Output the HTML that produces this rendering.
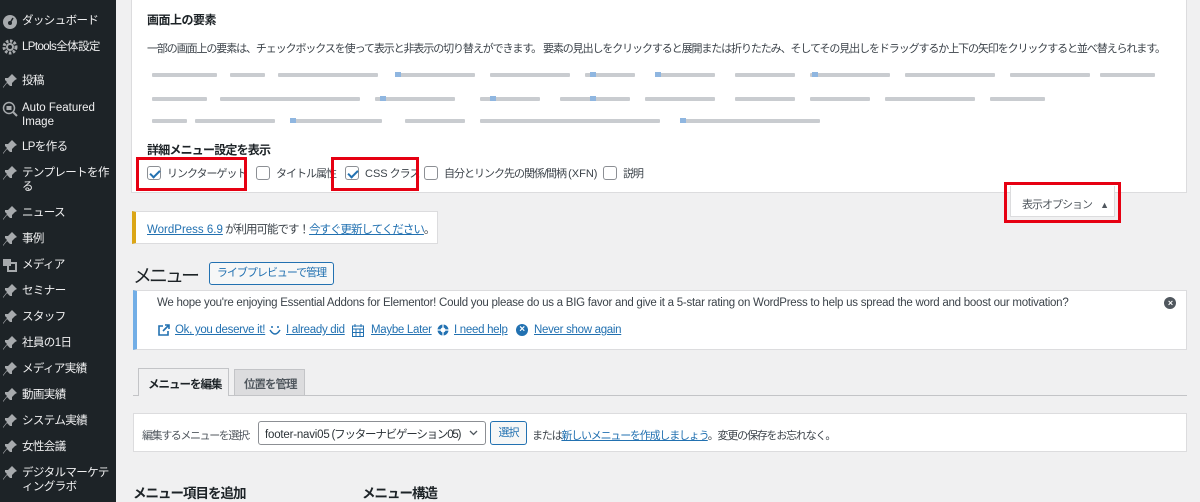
<!DOCTYPE html>
<html><head><meta charset="utf-8"><style>
*{margin:0;padding:0;box-sizing:border-box}
body{width:1200px;height:502px;overflow:hidden;background:#f0f0f1;font-family:"Liberation Sans","Noto Sans CJK JP",sans-serif;font-size:11px;letter-spacing:-1px;color:#3c434a;position:relative}
.a{position:absolute;white-space:nowrap}
#sb{position:absolute;left:0;top:0;width:116px;height:502px;background:#1d2327}
.si{position:absolute;left:22px;color:#f0f0f1;font-size:11.5px;letter-spacing:-0.6px;line-height:14px;white-space:nowrap}
.ic{position:absolute;left:2px;width:16px;height:16px}
.cb{display:inline-block;width:14px;height:14px;border:1px solid #8c8f94;border-radius:3px;background:#fff;vertical-align:-3px;margin-right:6px;position:relative}
.cb.on::after{content:"";position:absolute;left:4px;top:1px;width:4px;height:8px;border:solid #2271b1;border-width:0 2px 2px 0;transform:rotate(45deg)}
.red{position:absolute;border:3px solid #e60012}
.bl{position:absolute;height:4px;background:#c9ccd0;border-radius:1px}
.bb{position:absolute;height:5px;width:6px;background:#8fb6e0}
a{color:#2271b1}
.en{letter-spacing:0}
</style></head><body>
<svg width="0" height="0" style="position:absolute"><defs>
<symbol id="pin" viewBox="0 0 16 16"><path d="M10 1 L15 6 L13 7 L10 10 L10 13 L8 13 L5 10 L1 15 L1 14 L5 9 L3 7 L3 5 L6 5 L9 2 Z" fill="#a7aaad"/></symbol>
</defs></svg>
<div id="sb">
<svg class="ic" style="top:13px" viewBox="0 0 16 16"><circle cx="8" cy="9" r="7" fill="#a7aaad"/><circle cx="8" cy="10" r="2" fill="#1d2327"/><path d="M8 10 L11 5" stroke="#1d2327" stroke-width="1.5"/></svg><div class="si" style="top:14px">ダッシュボード</div>
<svg class="ic" style="top:39px" viewBox="0 0 16 16"><circle cx="8" cy="8" r="6" fill="none" stroke="#a7aaad" stroke-width="3" stroke-dasharray="2.5 1.5"/><circle cx="8" cy="8" r="4" fill="#a7aaad"/><circle cx="8" cy="8" r="2" fill="#1d2327"/></svg><div class="si" style="top:40px">LPtools全体設定</div>
<svg class="ic" style="top:73px"><use href="#pin"/></svg><div class="si" style="top:74px">投稿</div>
<svg class="ic" style="top:101px" viewBox="0 0 16 16"><circle cx="7" cy="7" r="5.5" fill="none" stroke="#a7aaad" stroke-width="1.5"/><path d="M11 11 L15 15" stroke="#a7aaad" stroke-width="2"/><rect x="4.5" y="5" width="5" height="4" fill="#a7aaad"/></svg><div class="si en" style="top:101px;letter-spacing:0">Auto Featured<br>Image</div>
<svg class="ic" style="top:139px"><use href="#pin"/></svg><div class="si" style="top:140px">LPを作る</div>
<svg class="ic" style="top:165px"><use href="#pin"/></svg><div class="si" style="top:166px">テンプレートを作<br>る</div>
<svg class="ic" style="top:205px"><use href="#pin"/></svg><div class="si" style="top:206px">ニュース</div>
<svg class="ic" style="top:231px"><use href="#pin"/></svg><div class="si" style="top:232px">事例</div>
<svg class="ic" style="top:257px" viewBox="0 0 16 16"><rect x="1" y="2" width="8" height="7" fill="#a7aaad"/><rect x="6" y="6" width="8" height="8" fill="none" stroke="#a7aaad" stroke-width="2"/></svg><div class="si" style="top:258px">メディア</div>
<svg class="ic" style="top:283px"><use href="#pin"/></svg><div class="si" style="top:284px">セミナー</div>
<svg class="ic" style="top:309px"><use href="#pin"/></svg><div class="si" style="top:310px">スタッフ</div>
<svg class="ic" style="top:335px"><use href="#pin"/></svg><div class="si" style="top:336px">社員の1日</div>
<svg class="ic" style="top:361px"><use href="#pin"/></svg><div class="si" style="top:362px">メディア実績</div>
<svg class="ic" style="top:387px"><use href="#pin"/></svg><div class="si" style="top:388px">動画実績</div>
<svg class="ic" style="top:413px"><use href="#pin"/></svg><div class="si" style="top:414px">システム実績</div>
<svg class="ic" style="top:439px"><use href="#pin"/></svg><div class="si" style="top:440px">女性会議</div>
<svg class="ic" style="top:465px"><use href="#pin"/></svg><div class="si" style="top:466px">デジタルマーケテ<br>ィングラボ</div>
</div>

<div class="a" style="left:131px;top:0;width:1056px;height:193px;background:#fff;border:1px solid #dcdcde;border-top:none"></div>
<div class="a" style="left:147px;top:11px;font-weight:bold;color:#1d2327;font-size:12px;letter-spacing:-0.5px">画面上の要素</div>
<div class="a" style="left:147px;top:40px;font-size:11px;letter-spacing:-1.1px">一部の画面上の要素は、チェックボックスを使って表示と非表示の切り替えができます。 要素の見出しをクリックすると展開または折りたたみ、そしてその見出しをドラッグするか上下の矢印をクリックすると並べ替えられます。</div>

<div class="bl" style="left:152px;top:73px;width:65px"></div><div class="bl" style="left:230px;top:73px;width:35px"></div><div class="bl" style="left:278px;top:73px;width:100px"></div><div class="bl" style="left:395px;top:73px;width:80px"></div><div class="bl" style="left:490px;top:73px;width:80px"></div><div class="bl" style="left:585px;top:73px;width:50px"></div><div class="bl" style="left:655px;top:73px;width:60px"></div><div class="bl" style="left:735px;top:73px;width:60px"></div><div class="bl" style="left:810px;top:73px;width:80px"></div><div class="bl" style="left:905px;top:73px;width:90px"></div><div class="bl" style="left:1010px;top:73px;width:80px"></div><div class="bl" style="left:1100px;top:73px;width:55px"></div>
<div class="bl" style="left:152px;top:97px;width:55px"></div><div class="bl" style="left:220px;top:97px;width:140px"></div><div class="bl" style="left:375px;top:97px;width:80px"></div><div class="bl" style="left:480px;top:97px;width:60px"></div><div class="bl" style="left:560px;top:97px;width:70px"></div><div class="bl" style="left:645px;top:97px;width:70px"></div><div class="bl" style="left:735px;top:97px;width:60px"></div><div class="bl" style="left:810px;top:97px;width:60px"></div><div class="bl" style="left:885px;top:97px;width:90px"></div><div class="bl" style="left:990px;top:97px;width:55px"></div>
<div class="bl" style="left:152px;top:119px;width:35px"></div><div class="bl" style="left:195px;top:119px;width:80px"></div><div class="bl" style="left:292px;top:119px;width:90px"></div><div class="bl" style="left:405px;top:119px;width:60px"></div><div class="bl" style="left:480px;top:119px;width:180px"></div><div class="bl" style="left:680px;top:119px;width:140px"></div>
<div class="bb" style="left:395px;top:72px"></div><div class="bb" style="left:590px;top:72px"></div><div class="bb" style="left:655px;top:72px"></div><div class="bb" style="left:812px;top:72px"></div><div class="bb" style="left:380px;top:96px"></div><div class="bb" style="left:490px;top:96px"></div><div class="bb" style="left:590px;top:96px"></div><div class="bb" style="left:290px;top:118px"></div><div class="bb" style="left:680px;top:118px"></div>

<div class="a" style="left:147px;top:141px;font-weight:bold;color:#1d2327;font-size:12px;letter-spacing:-0.8px">詳細メニュー設定を表示</div>
<div class="a" style="left:147px;top:165px"><span class="cb on"></span>リンクターゲット</div>
<div class="a" style="left:256px;top:165px"><span class="cb"></span>タイトル属性</div>
<div class="a" style="left:345px;top:165px"><span class="cb on"></span><span class="en">CSS</span> クラス</div>
<div class="a" style="left:424px;top:165px"><span class="cb"></span>自分とリンク先の関係/間柄 <span class="en">(XFN)</span></div>
<div class="a" style="left:603px;top:165px"><span class="cb"></span>説明</div>
<div class="red" style="left:136px;top:157px;width:111px;height:34px"></div>
<div class="red" style="left:331px;top:157px;width:88px;height:34px"></div>

<div class="a" style="left:1010px;top:186px;width:105px;height:31px;background:#fff;border:1px solid #dcdcde;border-top:none;font-size:11px;color:#50575e;padding:10px 0 0 11px">表示オプション <span style="font-size:9px;margin-left:6px">▲</span></div>
<div class="red" style="left:1004px;top:182px;width:117px;height:41px"></div>

<div class="a" style="left:132px;top:211px;width:306px;height:33px;background:#fff;border:1px solid #dcdcde;border-left:4px solid #dba617;padding:9px 0 0 11px;font-size:11.5px;color:#3c434a"><a href="#" class="en">WordPress 6.9</a> が利用可能です！<a href="#">今すぐ更新してください</a>。</div>

<div class="a" style="left:133px;top:261px;font-size:19px;letter-spacing:-3px;color:#1d2327">メニュー</div>
<div class="a" style="left:209px;top:262px;width:125px;height:23px;border:1px solid #2271b1;border-radius:3px;background:#f6f7f7;color:#2271b1;font-size:11px;text-align:center;line-height:21px">ライブプレビューで管理</div>

<div class="a" style="left:133px;top:290px;width:1054px;height:60px;background:#fff;border:1px solid #dcdcde;border-left:4px solid #72aee6"></div>
<div class="a en" style="left:157px;top:297px;font-size:11.5px;letter-spacing:-0.25px;color:#3c434a">We hope you're enjoying Essential Addons for Elementor! Could you please do us a BIG favor and give it a 5-star rating on WordPress to help us spread the word and boost our motivation?</div>
<div class="a" style="left:1164px;top:297px;width:12px;height:12px;border-radius:50%;background:#50575e;color:#fff;font-size:9px;line-height:12px;text-align:center;font-weight:bold">×</div>
<div class="a en" style="top:324px;left:158px;font-size:11.5px;letter-spacing:-0.3px;color:#2271b1">
<svg style="position:absolute;left:0;top:0" width="12" height="12" viewBox="0 0 12 12"><path d="M5 2 H1 V11 H10 V7 M7 1 H11 V5 M11 1 L5 7" fill="none" stroke="#2271b1" stroke-width="1.6"/></svg>
<a href="#" style="position:absolute;left:17px">Ok, you deserve it!</a>
<svg style="position:absolute;left:110px;top:1px" width="14" height="12" viewBox="0 0 14 12"><path d="M2 5 Q7 13 12 5" fill="none" stroke="#2271b1" stroke-width="1.5"/><circle cx="4" cy="2" r="1" fill="#2271b1"/><circle cx="10" cy="2" r="1" fill="#2271b1"/></svg>
<a href="#" style="position:absolute;left:128px">I already did</a>
<svg style="position:absolute;left:194px;top:0" width="12" height="13" viewBox="0 0 12 13"><rect x="0.5" y="2" width="11" height="10.5" fill="none" stroke="#2271b1"/><path d="M0 5 H12 M3 0 V3 M9 0 V3 M4 5 V13 M8 5 V13 M0 8.5 H12" stroke="#2271b1"/></svg>
<a href="#" style="position:absolute;left:213px">Maybe Later</a>
<svg style="position:absolute;left:279px;top:0" width="12" height="12" viewBox="0 0 12 12"><circle cx="6" cy="6" r="5.5" fill="#2271b1"/><circle cx="6" cy="6" r="2.5" fill="#fff"/><path d="M6 0 V12 M0 6 H12" stroke="#fff" stroke-width="1.2"/></svg>
<a href="#" style="position:absolute;left:296px">I need help</a>
<span style="position:absolute;left:358px;top:0;width:12px;height:12px;border-radius:50%;background:#2271b1;color:#fff;font-size:10px;line-height:12px;text-align:center;font-weight:bold">×</span>
<a href="#" style="position:absolute;left:376px">Never show again</a></div>

<div class="a" style="left:133px;top:395px;width:1054px;height:1px;background:#c3c4c7"></div>
<div class="a" style="left:138px;top:368px;width:91px;height:28px;background:#f0f0f1;border:1px solid #c3c4c7;border-bottom:none;font-weight:bold;color:#1d2327;font-size:11.5px;padding:7px 0 0 9px">メニューを編集</div>
<div class="a" style="left:234px;top:369px;width:71px;height:26px;background:#dcdcde;border:1px solid #c3c4c7;border-bottom:none;font-weight:bold;color:#50575e;font-size:11.5px;padding:6px 0 0 9px">位置を管理</div>

<div class="a" style="left:133px;top:413px;width:1054px;height:39px;background:#fff;border:1px solid #dcdcde"></div>
<div class="a" style="left:142px;top:427px;font-size:11px;letter-spacing:-1.4px;color:#50575e">編集するメニューを選択:</div>
<div class="a" style="left:258px;top:421px;width:228px;height:24px;border:1px solid #8c8f94;border-radius:3px;background:#fff;font-size:11.5px;letter-spacing:-1.2px;color:#2c3338;padding:4px 0 0 6px"><span class="en" style="letter-spacing:-0.2px">footer-navi05</span> (フッターナビゲーション05) <svg style="position:absolute;right:7px;top:8px" width="9" height="6" viewBox="0 0 9 6"><path d="M1 1 L4.5 4.5 L8 1" fill="none" stroke="#50575e" stroke-width="1.3"/></svg></div>
<div class="a" style="left:490px;top:421px;width:37px;height:24px;border:1px solid #2271b1;border-radius:3px;background:#f6f7f7;color:#2271b1;font-size:11px;text-align:center;line-height:22px">選択</div>
<div class="a" style="left:532px;top:427px;font-size:11px;letter-spacing:-1.2px;color:#3c434a">または<a href="#">新しいメニューを作成しましょう</a>。変更の保存をお忘れなく。</div>

<div class="a" style="left:133px;top:482px;font-size:13.5px;font-weight:bold;color:#1d2327;letter-spacing:-1px">メニュー項目を追加</div>
<div class="a" style="left:362px;top:482px;font-size:13.5px;font-weight:bold;color:#1d2327;letter-spacing:-1px">メニュー構造</div>
</body></html>
